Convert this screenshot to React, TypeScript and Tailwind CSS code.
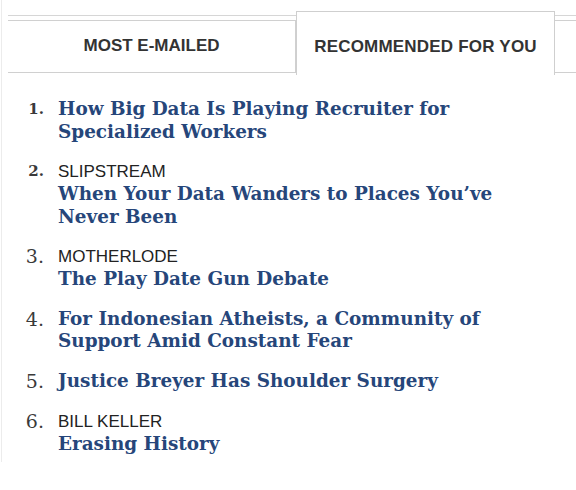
import React from "react";

type Story = {
  n: string;
  kicker?: string;
  title: string;
  bigNum?: boolean;
};

const stories: Story[] = [
  { n: "1.", title: "How Big Data Is Playing Recruiter for Specialized Workers" },
  { n: "2.", kicker: "SLIPSTREAM", title: "When Your Data Wanders to Places You\u2019ve Never Been" },
  { n: "3.", kicker: "MOTHERLODE", title: "The Play Date Gun Debate", bigNum: true },
  { n: "4.", title: "For Indonesian Atheists, a Community of Support Amid Constant Fear", bigNum: true },
  { n: "5.", title: "Justice Breyer Has Shoulder Surgery", bigNum: true },
  { n: "6.", kicker: "BILL KELLER", title: "Erasing History", bigNum: true },
];

const sans = "font-['Liberation_Sans',Arial,sans-serif]";
const serif = "font-['DejaVu_Serif',Georgia,serif]";

export default function App() {
  return (
    <div className="w-[576px] h-[490px] bg-white overflow-hidden">
      <div className="h-[462px] border-l border-[#ececec] ml-[1px]">
        {/* tabs */}
        <div className="flex h-[75px] pl-[6px] pt-[11px]">
          <div className="w-[288px] mt-[4px] border-t border-[#d6d6d6] flex flex-col">
            <div className="mt-[4px] flex-1 border-t border-b border-r border-[#d0d0d0] mb-[2px] flex items-center justify-center">
              <span className={`${sans} font-bold text-[17px] text-[#333] pb-[1px]`}>MOST E-MAILED</span>
            </div>
          </div>
          <div className="w-[259px] border-t border-l border-r border-[#cfcfcf] flex items-center justify-center">
            <span className={`${sans} font-bold text-[17px] text-[#333] tracking-[0.2px] pt-[7px]`}>
              RECOMMENDED FOR YOU
            </span>
          </div>
          <div className="flex-1 mt-[4px] border-t border-[#d6d6d6] flex flex-col">
            <div className="mt-[4px] flex-1 border-t border-b border-[#d0d0d0] mb-[2px]" />
          </div>
        </div>

        {/* list */}
        <ol className="pt-[23px] pl-[6px] flex flex-col gap-[17px]">
          {stories.map((s) => (
            <li key={s.n} className="flex">
              <span
                className={`${serif} w-[36px] text-right text-[#3a3a3a] shrink-0 ${
                  s.bigNum ? "text-[19px] leading-[23px]" : "text-[15px] font-bold leading-[23px]"
                }`}
              >
                {s.n}
              </span>
              <div className="pl-[14px] w-[510px]">
                {s.kicker && (
                  <div className={`${sans} text-[17px] leading-[23px] text-[#222]`}>{s.kicker}</div>
                )}
                <div className={`${serif} font-bold text-[18.4px] leading-[22.5px] text-[#26467a] w-[465px]`}>
                  {s.title}
                </div>
              </div>
            </li>
          ))}
        </ol>
      </div>
    </div>
  );
}
